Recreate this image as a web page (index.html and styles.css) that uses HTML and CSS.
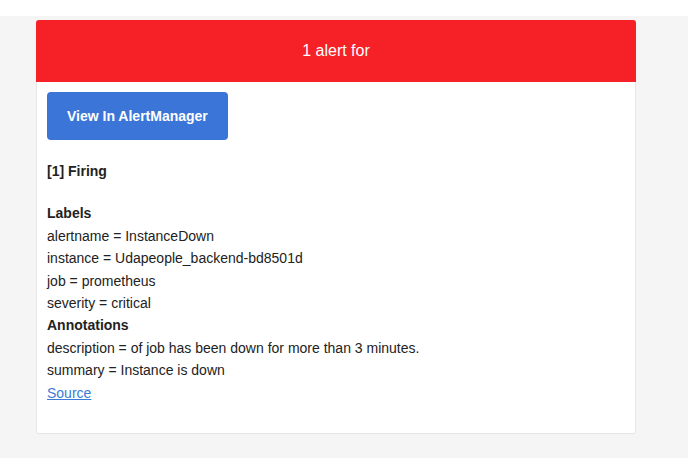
FILE: index.html
```
<!DOCTYPE html>
<html>
<head>
<meta charset="utf-8">
<link rel="stylesheet" href="styles.css">
</head>
<body>
<div class="topbar"></div>
<div class="page">
  <div class="card">
    <div class="alert">1 alert for</div>
    <div class="content">
      <div class="block"><a class="btn" href="#">View In AlertManager</a></div>
      <div class="block"><strong>[1] Firing</strong></div>
      <div class="block">
        <strong>Labels</strong><br>
        alertname = InstanceDown<br>
        instance = Udapeople_backend-bd8501d<br>
        job = prometheus<br>
        severity = critical<br>
        <strong>Annotations</strong><br>
        description = of job has been down for more than 3 minutes.<br>
        summary = Instance is down<br>
        <a class="link" href="#">Source</a><br>
      </div>
    </div>
  </div>
</div>
</body>
</html>
```
FILE: styles.css
```
html, body {
  margin: 0;
  padding: 0;
}
body {
  background: #f5f5f5;
  font-family: "Liberation Sans", Arial, sans-serif;
  font-size: 14px;
  color: #222222;
  height: 458px;
  overflow: hidden;
}
.topbar {
  height: 16px;
  background: #ffffff;
}
.page {
  padding: 4px 0 0 36px;
}
.card {
  width: 598px;
  background: #ffffff;
  border: 1px solid #e6e6e6;
  border-radius: 3px;
}
.alert {
  height: 62px;
  margin: -1px -1px 0 -1px;
  background: #f62027;
  color: #ffffff;
  font-size: 16px;
  display: flex;
  align-items: center;
  justify-content: center;
  border-radius: 3px 3px 0 0;
}
.content {
  padding: 10px 10px 9px 10px;
  line-height: 1.6em;
}
.block {
  padding-bottom: 20px;
}
.btn {
  display: inline-block;
  background: #3c75d8;
  color: #ffffff;
  font-weight: bold;
  text-decoration: none;
  line-height: 28px;
  padding: 10px 20px;
  border-radius: 4px;
}
.link {
  color: #3a7bd5;
}
```
